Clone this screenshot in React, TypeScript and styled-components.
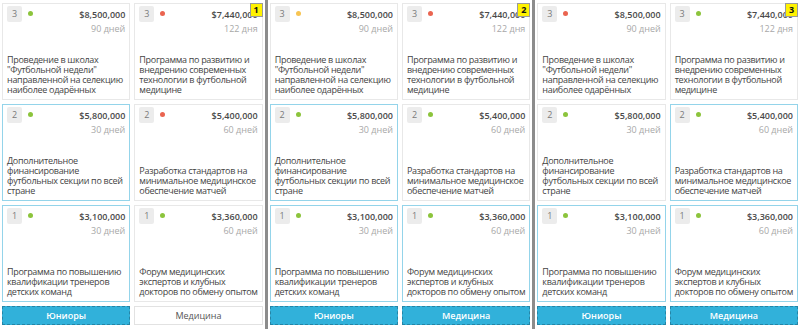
import styled, { createGlobalStyle } from "styled-components";

const GlobalStyle = createGlobalStyle`
  html, body {
    margin: 0;
    padding: 0;
    background: #ffffff;
  }
  body {
    font-family: "Open Sans", "DejaVu Sans", sans-serif;
  }
`;

type DotColor = "green" | "red" | "yellow";

interface Project {
  level: number;
  price: string;
  days: string;
  title: string;
}

const dotColors: Record<DotColor, string> = {
  green: "#8cc43c",
  red: "#ea6450",
  yellow: "#f7c452",
};

const projects: Project[] = [
  {
    level: 3,
    price: "$8,500,000",
    days: "90 дней",
    title:
      'Проведение в школах "Футбольной недели" направленной на селекцию наиболее одарённых',
  },
  {
    level: 3,
    price: "$7,440,000",
    days: "122 дня",
    title:
      "Программа по развитию и внедрению современных технологии в футбольной медицине",
  },
  {
    level: 2,
    price: "$5,800,000",
    days: "30 дней",
    title: "Дополнительное финансирование футбольных секции по всей стране",
  },
  {
    level: 2,
    price: "$5,400,000",
    days: "60 дней",
    title: "Разработка стандартов на минимальное медицинское обеспечение матчей",
  },
  {
    level: 1,
    price: "$3,100,000",
    days: "30 дней",
    title: "Программа по повышению квалификации тренеров детских команд",
  },
  {
    level: 1,
    price: "$3,360,000",
    days: "60 дней",
    title: "Форум медицинских экспертов и клубных докторов по обмену опытом",
  },
];

interface PanelData {
  number: number;
  dots: DotColor[];
  selected: boolean[];
  juniorsActive: boolean;
  medicineActive: boolean;
}

const panels: PanelData[] = [
  {
    number: 1,
    dots: ["green", "red", "green", "red", "green", "green"],
    selected: [false, false, true, false, true, false],
    juniorsActive: true,
    medicineActive: false,
  },
  {
    number: 2,
    dots: ["yellow", "red", "green", "green", "green", "green"],
    selected: [false, false, true, false, true, true],
    juniorsActive: true,
    medicineActive: true,
  },
  {
    number: 3,
    dots: ["red", "green", "green", "green", "green", "green"],
    selected: [false, false, false, true, true, true],
    juniorsActive: true,
    medicineActive: true,
  },
];

export default function App() {
  return (
    <>
      <GlobalStyle />
      <Screen>
        {panels.map((panel, i) => (
          <>
            {i > 0 && <Divider key={`d${i}`} />}
            <Panel key={panel.number}>
              {projects.map((p, idx) => (
                <Card key={idx} selected={panel.selected[idx]}>
                  <CardHead>
                    <Level>{p.level}</Level>
                    <Dot color={dotColors[panel.dots[idx]]} />
                    <Price>{p.price}</Price>
                  </CardHead>
                  <Days>{p.days}</Days>
                  <Title>{p.title}</Title>
                </Card>
              ))}
              <TabButton active={panel.juniorsActive}>Юниоры</TabButton>
              <TabButton active={panel.medicineActive}>Медицина</TabButton>
              <StepBadge>{panel.number}</StepBadge>
            </Panel>
          </>
        ))}
      </Screen>
    </>
  );
}

const Screen = styled.div`
  display: flex;
  width: 800px;
  height: 329px;
  overflow: hidden;
  background: #ffffff;
`;

const Divider = styled.div`
  width: 3px;
  flex-shrink: 0;
  background: #8c8c8c;
`;

const Panel = styled.section`
  position: relative;
  flex: 1;
  display: grid;
  grid-template-columns: 1fr 1fr;
  grid-template-rows: 97px 97px 97px 19px;
  gap: 4px 4px;
  padding: 3px 2px 3px 2px;
  box-sizing: border-box;
  height: 329px;
`;

const Card = styled.div<{ selected: boolean }>`
  display: flex;
  flex-direction: column;
  box-sizing: border-box;
  border: 1px solid ${(p) => (p.selected ? "#94d4ea" : "#e8e8e8")};
  padding: 2px 4px 4px 4px;
  min-width: 0;
  overflow: hidden;
`;

const CardHead = styled.div`
  display: flex;
  align-items: center;
  height: 16px;
`;

const Level = styled.span`
  width: 15px;
  height: 16px;
  border-radius: 2px;
  background: #ececec;
  color: #7a7a7a;
  font-size: 9px;
  line-height: 16px;
  text-align: center;
`;

const Dot = styled.span<{ color: string }>`
  width: 5px;
  height: 5px;
  border-radius: 50%;
  margin-left: 6px;
  margin-top: -2px;
  background: ${(p) => p.color};
`;

const Price = styled.span`
  margin-left: auto;
  font-size: 9px;
  font-weight: 600;
  color: #4a4a4a;
  white-space: nowrap;
`;

const Days = styled.div`
  margin-top: 1px;
  text-align: right;
  font-size: 9px;
  line-height: 12px;
  color: #a8a8a8;
`;

const Title = styled.div`
  margin-top: auto;
  font-size: 9px;
  line-height: 10px;
  letter-spacing: -0.3px;
  color: #444444;
`;

const TabButton = styled.button<{ active: boolean }>`
  margin: 0;
  padding: 0;
  box-sizing: border-box;
  height: 19px;
  font-family: "Open Sans", "DejaVu Sans", sans-serif;
  font-size: 9px;
  font-weight: ${(p) => (p.active ? 600 : 400)};
  color: ${(p) => (p.active ? "#ffffff" : "#555555")};
  background: ${(p) => (p.active ? "#31b1da" : "#ffffff")};
  border: 1px ${(p) => (p.active ? "dashed #2585a6" : "solid #e2e2e2")};
`;

const StepBadge = styled.span`
  position: absolute;
  top: 3px;
  right: 2px;
  width: 13px;
  height: 14px;
  box-sizing: border-box;
  border: 1px solid #9a9a9a;
  background: #fff200;
  color: #111111;
  font-size: 9px;
  font-weight: 700;
  line-height: 12px;
  text-align: center;
`;
